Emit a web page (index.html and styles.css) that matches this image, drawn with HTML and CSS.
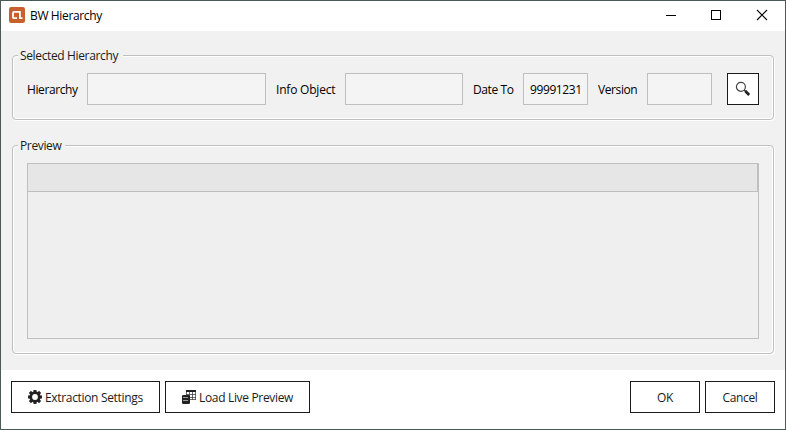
FILE: index.html
```html
<!DOCTYPE html>
<html lang="en">
<head>
<meta charset="utf-8">
<title>BW Hierarchy</title>
<link rel="stylesheet" href="styles.css">
</head>
<body>
<div class="window">
  <header class="titlebar">
    <svg class="logo" width="16" height="16" viewBox="0 0 16 16"><rect width="16" height="16" rx="2.2" fill="#cb5f2b"/><path d="M8 11.200H5Q4 11.200 4 10.200V6Q4 4.900 5.100 4.900H10.900V11.200H13.500" fill="none" stroke="#fff" stroke-width="1.800"/></svg>
    <h1 class="title">BW Hierarchy</h1>
    <div class="controls">
      <svg width="46" height="29" viewBox="0 0 46 29" shape-rendering="crispEdges"><path d="M18 14.500H28" stroke="#000"/></svg>
      <svg width="46" height="29" viewBox="0 0 46 29" shape-rendering="crispEdges"><rect x="17.500" y="9.500" width="9" height="9" fill="none" stroke="#000"/></svg>
      <svg width="46" height="29" viewBox="0 0 46 29"><path d="M17 9L27 19M27 9L17 19" stroke="#000" stroke-width="1.100"/></svg>
    </div>
  </header>
  <main class="content">
    <fieldset class="group selected">
      <legend class="legend legend-selected">Selected Hierarchy</legend>
      <div class="fields">
        <label class="label l-hierarchy">Hierarchy</label><div class="field f-hierarchy"></div>
        <label class="label l-info">Info Object</label><div class="field f-info"></div>
        <label class="label l-date">Date To</label><div class="field f-small"><span class="value">99991231</span></div>
        <label class="label l-version">Version</label><div class="field f-small"></div>
        <button class="button search" aria-label="Search"><svg width="16" height="16" viewBox="0 0 16 16"><circle cx="5.900" cy="5.800" r="4.500" fill="none" stroke="#444" stroke-width="1.200"/><path d="M9.200 9L11 10.700" stroke="#333" stroke-width="1.500"/><path d="M10.300 10.100L14.200 13.900" stroke="#222" stroke-width="2.800"/></svg></button>
      </div>
    </fieldset>
    <fieldset class="group preview">
      <legend class="legend legend-preview">Preview</legend>
      <div class="table"><div class="table-head"></div></div>
    </fieldset>
  </main>
  <footer class="footer">
    <button class="button extraction"><svg class="icon" width="14" height="14" viewBox="0 0 14 14"><g stroke="#222" stroke-width="3"><path d="M7 0V3M7 11V14M0 7H3M11 7H14M1.900 1.900L4 4M10 10L12.100 12.100M1.900 12.100L4 10M10 4L12.100 1.900"/></g><circle cx="7" cy="7" r="4.300" fill="none" stroke="#222" stroke-width="2.800"/></svg><span>Extraction Settings</span></button>
    <button class="button load"><svg class="icon" width="14" height="14" viewBox="0 0 14 14"><path d="M4 0H14V2H4Z" fill="#222"/><path d="M4.500 2V5M7.500 2V10M10.500 2V10M13.500 2V10M4 4.500H14M8 7.500H14M8 9.500H14" stroke="#444" stroke-width=".8"/><path d="M0 6Q0 5 1.500 5H6.500Q8 5 8 6V13Q8 14 6.500 14H1.500Q0 14 0 13Z" fill="#222"/><path d="M1 7.500H6M1 10.500H6" stroke="#bbb" stroke-width=".8"/></svg><span>Load Live Preview</span></button>
    <button class="button dialog ok">OK</button>
    <button class="button dialog">Cancel</button>
  </footer>
</div>
</body>
</html>
```
FILE: styles.css
```css
* { box-sizing: border-box; }
body { margin: 0; font: 12px/16px "Open Sans", "Noto Sans", sans-serif; color: #1b1b1b; }
svg { display: block; flex: none; }
.window { width: 786px; height: 430px; border: 1px solid #4a5a59; background: #fff; display: flex; flex-direction: column; }
.titlebar { height: 30px; display: flex; align-items: flex-start; padding-left: 8px; flex: none; }
.logo { margin-top: 6px; }
.title { margin: 7px 0 0 5px; font-size: 12px; font-weight: 400; line-height: 16px; color: #000; letter-spacing: -.36px; white-space: nowrap; }
.controls { display: flex; margin-left: auto; margin-right: -1px; }
.content { height: 339px; flex: none; background: #f1f1f1; padding: 17px 11px 0; }
.group { width: 762px; margin: 0; min-width: 0; border: 1px solid #bfbfbf; border-radius: 4px; padding: 0 14px; box-shadow: 1px 1px 0 #fff, inset 1px 1px 0 #fff, inset -1px -1px 0 #fff; }
.selected { height: 72px; }
.preview { height: 216px; margin-top: 18px; }
.legend { margin-left: -9px; padding: 0 0 0 2px; height: 14px; line-height: 16px; white-space: nowrap; letter-spacing: -.36px; background: #f1f1f1; }
.legend-selected { width: 105px; }
.legend-preview { width: 47px; }
.fields { display: flex; align-items: center; height: 32px; margin-top: 11px; }
.label { white-space: nowrap; color: #000; letter-spacing: -.4px; padding-top: 2px; }
.l-hierarchy { width: 60px; }
.l-info { width: 69px; margin-left: 10px; letter-spacing: -.2px; }
.l-date { width: 50px; margin-left: 10px; }
.l-version { width: 49px; margin-left: 10px; }
.field { height: 32px; border: 1px solid #bfbfbf; background: #f4f4f4; padding: 8px 0 0 6px; }
.f-hierarchy { width: 179px; }
.f-info { width: 118px; }
.f-small { width: 65px; }
.value { display: block; letter-spacing: -.4px; color: #000; }
.button { height: 32px; border: 1px solid #1b1b1b; background: #fff; padding: 0; margin: 0; font: inherit; color: #1b1b1b; display: flex; align-items: center; justify-content: center; white-space: nowrap; letter-spacing: -.33px; flex: none; }
.search { width: 32px; margin-left: 15px; }
.table { height: 176px; margin-top: 11px; width: 732px; border: 1px solid #bfbfbf; background: #efefef; }
.table-head { height: 28px; background: #e6e6e6; border-bottom: 1px solid #bfbfbf; border-right: 1px solid #bfbfbf; }
.footer { flex: 1; display: flex; align-items: flex-start; gap: 5px; padding: 11px 10px 0; }
.footer .button { padding-top: 2px; }
.extraction { width: 149px; justify-content: flex-start; padding-left: 16px; }
.load { width: 145px; justify-content: flex-start; padding-left: 16px; }
.icon { margin: -2px 3px 0 0; }
.dialog { width: 70px; }
.ok { margin-left: auto; }
```
